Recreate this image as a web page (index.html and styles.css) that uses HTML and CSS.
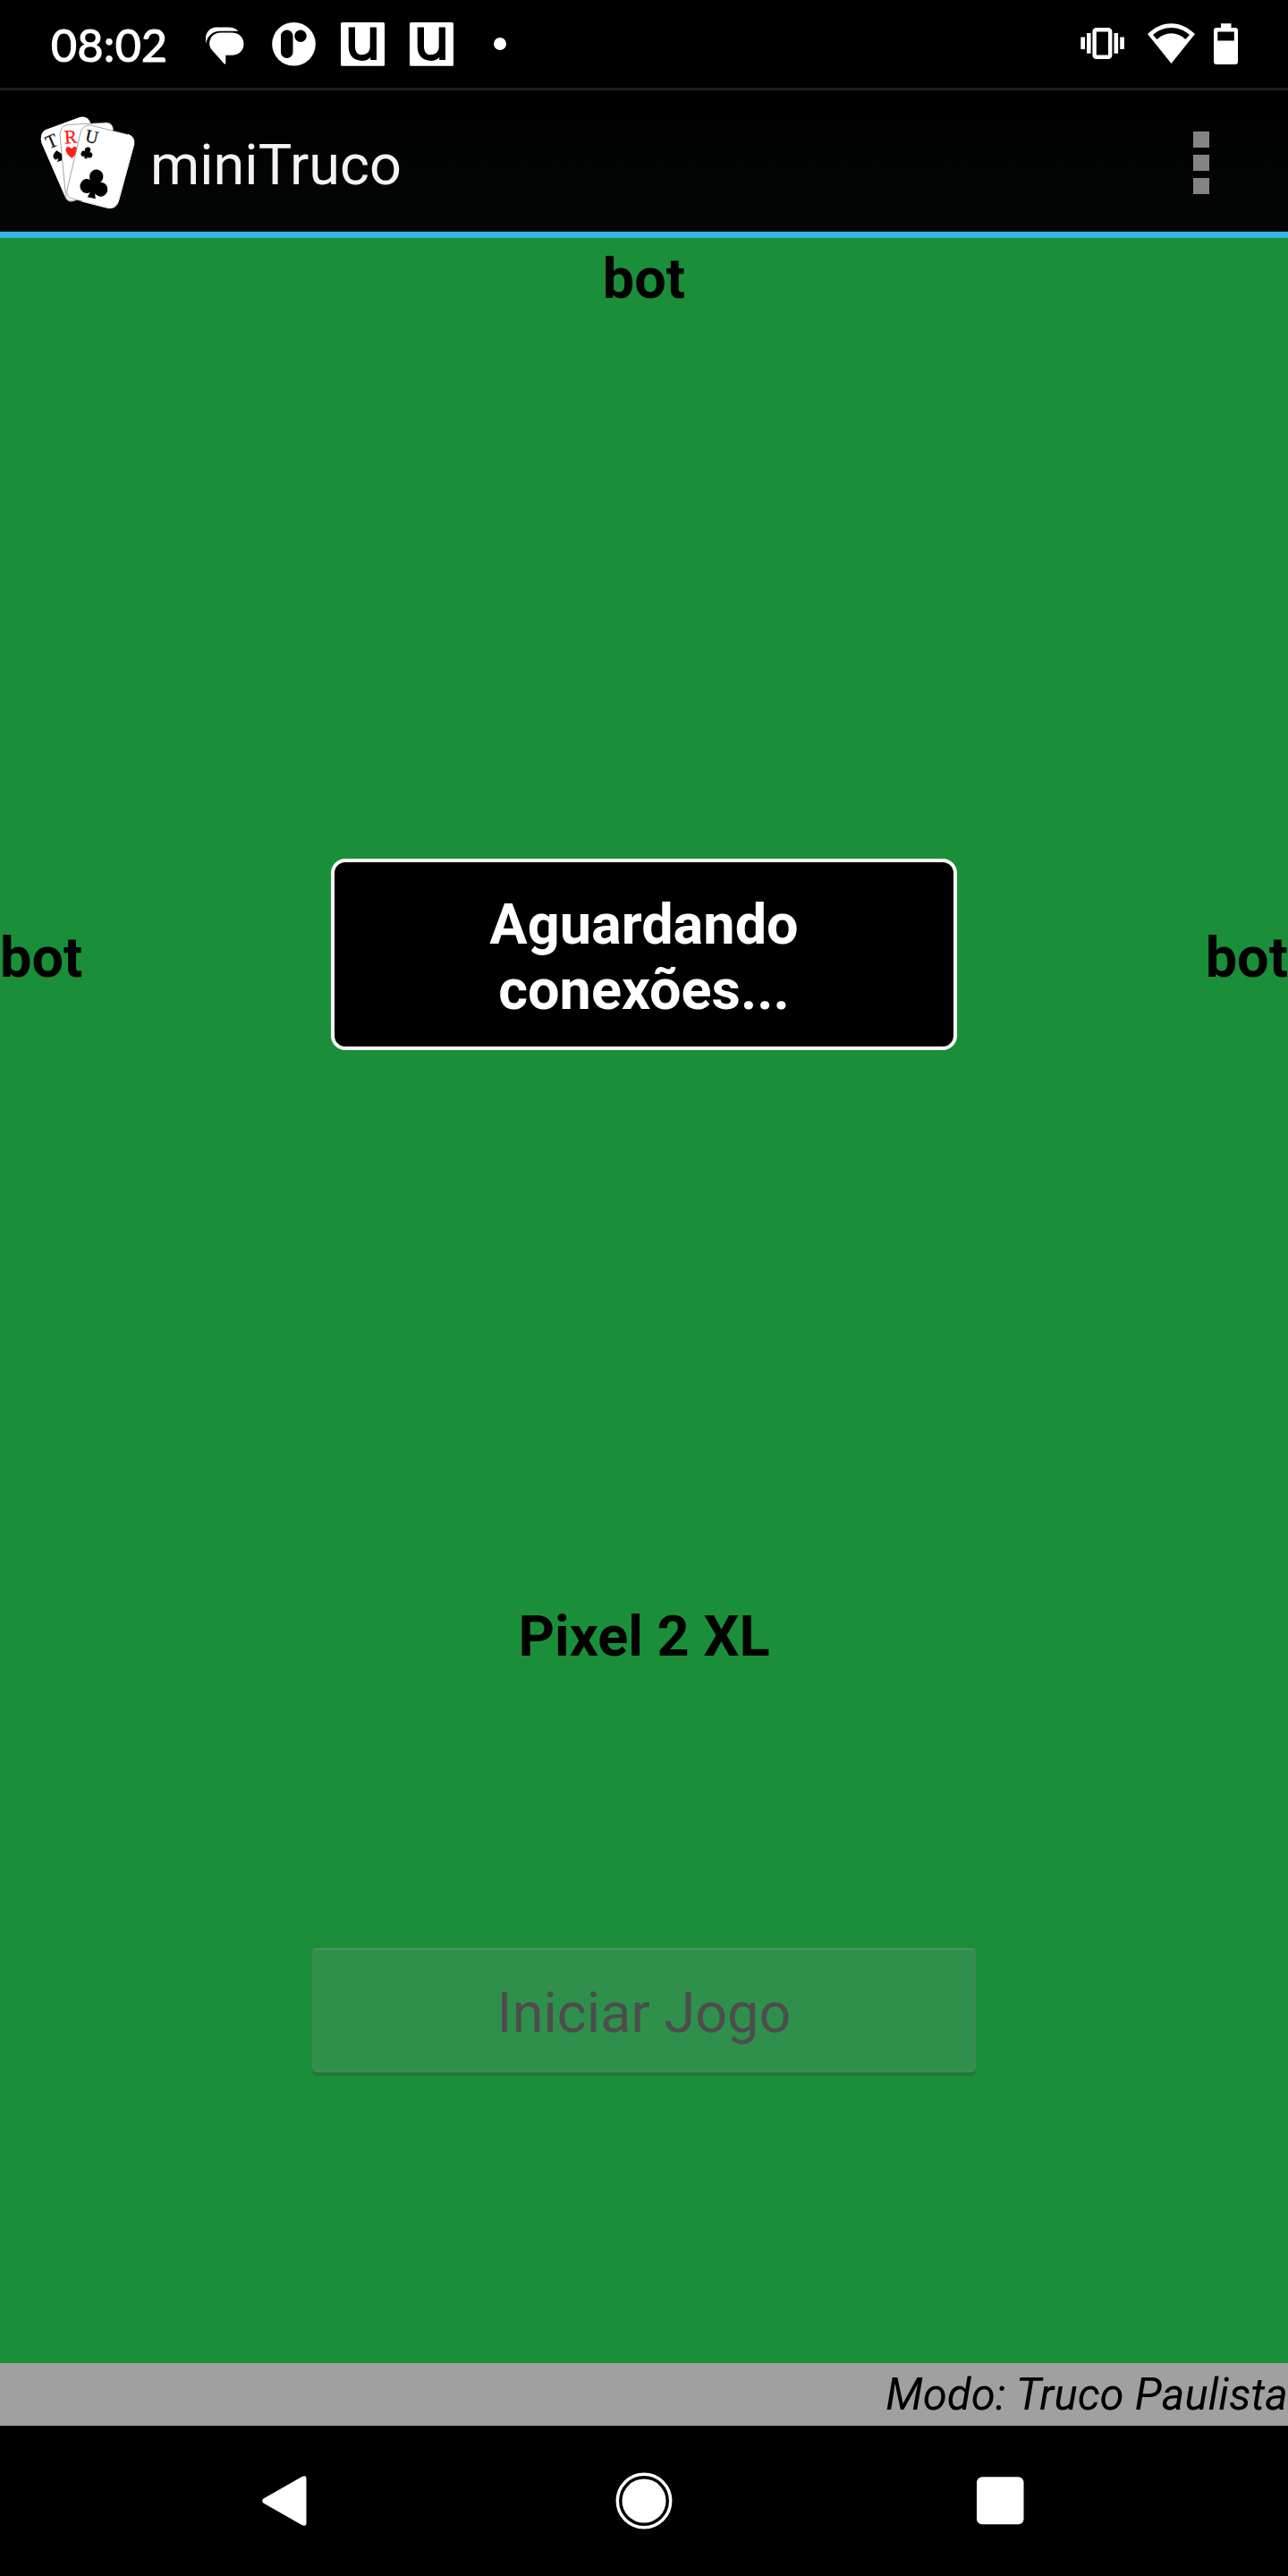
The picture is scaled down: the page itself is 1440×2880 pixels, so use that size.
FILE: index.html
```html
<!DOCTYPE html>
<html lang="pt-BR">
<head>
<meta charset="utf-8">
<title>miniTruco</title>
<link rel="stylesheet" href="styles.css">
</head>
<body>
<div class="screen">
  <header class="status">
    <span class="clock">08:02</span>
    <svg class="notifications" width="340" height="50" viewBox="228 24 340 50" fill="#fff">
      <path d="M230 49v-6c0-7 5-12.500 12-12.500h13c5 0 9 1.500 11.500 4.300H246c-8 0-14 5-16 14.200z"/>
      <path d="M247 36.500h12c8 0 13.500 5 13.500 12.500s-5.500 12.800-13.500 12.800h-6.700V71.500h-1.500L237 56c-2-2.500-2.800-4.500-2.800-7 0-7.500 5-12.500 12.800-12.500z"/>
      <circle cx="328.500" cy="49.300" r="24.300"/>
      <rect x="314" y="33.500" width="13.500" height="31.500" rx="6.700" fill="#000"/>
      <circle cx="336" cy="40.300" r="6.700" fill="#000"/>
      <g id="u-badge">
        <rect x="381" y="25" width="49" height="48.700" rx="1.500"/>
        <path d="M389.700 30.500h7.300V52c0 6 2.800 9.300 7.700 9.300 5.500 0 9-3.500 9-9.500V30.500h7.300V67h-6.800v-3c-2.500 2.500-5.500 3.900-9.300 3.900-9.300 0-15.200-5.900-15.200-15.600z" fill="#000"/>
      </g>
      <use href="#u-badge" x="77"/>
      <circle cx="559" cy="49" r="7"/>
    </svg>
    <svg class="indicators" width="180" height="50" viewBox="1206 24 180 50" fill="#fff">
      <path d="M1208.300 41.500h4.700V55h-4.700zM1215 37h4.600v22.700h-4.600zM1245.500 37h4.600v22.700h-4.600zM1252.200 41.500h4.700V55h-4.700z"/>
      <rect x="1223.600" y="33.200" width="17.600" height="30.500" rx="2" fill="none" stroke="#fff" stroke-width="4.400"/>
      <path fill-rule="evenodd" d="M1283 38c7.500-7.300 16.500-11.800 26.500-11.800S1328.300 30.700 1336 38l-26.500 33zM1289 39l4.700 5c4.500-4.300 10-6.700 15.800-6.700s11.300 2.400 15.800 6.700l4.700-5c-5.500-5-12.500-8-20.500-8s-15 3-20.500 8z"/>
      <path fill-rule="evenodd" d="M1365 26.300h11.500V31h4.500q3 0 3 3v35q0 3-3 3h-21q-3 0-3-3V34q0-3 3-3h5zM1361.300 35.500v10h18.500v-10z"/>
    </svg>
  </header>

  <div class="appbar">
    <svg class="logo" width="110" height="107" viewBox="40 55 330 321">
      <defs>
        <g id="club">
          <circle cx="0" cy="-23" r="24"/><circle cx="-25" cy="15" r="24"/><circle cx="25" cy="15" r="24"/>
          <path d="M-6-8H6L8 14Q9 42 15 50H-15Q-9 42-8 14z"/>
        </g>
      </defs>
      <path d="M62 107 178 64q26-7 37 20L160 345q-20 8-30-12L50 150q-7-30 12-43z" fill="#fff"/>
      <text class="rank" text-anchor="middle" y="21" font-size="64" transform="translate(84 145) rotate(-23) scale(.95 1)">T</text>
      <path d="M101 176q-14 13-11 23 5 13 17 3-1 9-6 13l18-6V188q-6-4-18-12z"/>
      <path d="M136 90 268 82q20 0 23 24L176 340q-36 14-44-8L112 123q1-29 24-33z" fill="#fff" stroke="#777" stroke-width="2"/>
      <text class="rank red" text-anchor="middle" y="21" font-size="64" transform="translate(148 130) rotate(-4) scale(.98 1)">R</text>
      <path d="M152 202Q130 184 131 171 137 155 151 170q13-17 20 2Q173 182 152 202z" fill="#ff201c"/>
      <path d="M215 91 340 122q24 7 20 34L308 347q-8 24-33 22L152 337q-22-8-15-33L181 116q8-27 34-25z" fill="#fff" stroke="#777" stroke-width="2"/>
      <path d="M340 122q24 7 20 34L308 347q-8 24-33 22l-90-23" fill="none" stroke="#fff" stroke-width="3"/>
      <text class="rank" text-anchor="middle" y="21" font-size="62" transform="translate(219 129) rotate(13) scale(.95 1)">U</text>
      <use href="#club" transform="translate(203 183) rotate(13) scale(.4)"/>
      <use href="#club" transform="translate(229 286) rotate(13) scale(.96 1)"/>
    </svg>
    <h1 class="title">miniTruco</h1>
    <div class="overflow"><i></i><i></i><i></i></div>
  </div>

  <main class="table">
    <div class="player top">bot</div>
    <div class="middle">
      <div class="player side">bot</div>
      <div class="notice">Aguardando<br>conexões...</div>
      <div class="player side">bot</div>
    </div>
    <div class="player self">Pixel 2 XL</div>
    <button class="start" disabled>Iniciar Jogo</button>
  </main>

  <div class="mode">Modo: Truco Paulista</div>

  <nav class="nav">
    <svg width="50" height="64" viewBox="0 0 50 64"><path d="M1.500 29.500 44.500 5q5-2.500 5 2.500v49q0 5-5 2.500L1.500 34.500q-2.500-2.500 0-5z" fill="#fff"/></svg>
    <svg width="64" height="64" viewBox="0 0 64 64"><circle cx="32" cy="32" r="29.700" fill="none" stroke="#fff" stroke-width="3.500"/><circle cx="32" cy="32" r="24.500" fill="#fff"/></svg>
    <svg width="53" height="64" viewBox="0 0 53 64"><rect y="5.300" width="52.500" height="53" rx="6" fill="#fff"/></svg>
  </nav>
</div>
</body>
</html>
```
FILE: styles.css
```css
* { box-sizing: border-box; }

body {
  margin: 0;
  background: #000;
  font-family: Roboto, sans-serif;
}

.screen {
  display: flex;
  flex-direction: column;
  width: 1440px;
  height: 2880px;
  overflow: hidden;
}

.status {
  display: flex;
  align-items: center;
  height: 101px;
  padding: 0 54px 0 57px;
  border-bottom: 3px solid #1c1e1d;
}

.clock {
  width: 171px;
  color: #fff;
  font: 400 50px/60px Lato, sans-serif;
  letter-spacing: .4px;
  -webkit-text-stroke: 1.2px #fff;
  padding-top: 2px;
}

.indicators { margin-left: auto; }

.appbar {
  display: flex;
  align-items: center;
  height: 165px;
  padding: 0 88px 0 43px;
  border-bottom: 7px solid #33b5e5;
  background: linear-gradient(#000, #040606);
}

.logo {
  flex: none;
  margin-top: 2px;
}

.rank {
  font-family: "Liberation Serif", serif;
  fill: #151515;
  stroke: #151515;
  stroke-width: 1;
}

.red {
  fill: #ff201c;
  stroke: #ff201c;
}

.title {
  margin: 9px auto 0 15px;
  color: #f3f3f3;
  font-size: 63px;
  font-weight: 400;
  line-height: 74px;
}

.overflow {
  display: grid;
  gap: 8px;
  margin-top: 3px;
}

.overflow i {
  width: 18px;
  height: 18px;
  background: #838383;
}

.table {
  display: flex;
  flex-direction: column;
  align-items: center;
  height: 2376px;
  background: #1b8e3a;
}

.player {
  color: #000;
  font-size: 63px;
  font-weight: 700;
  line-height: 74px;
}

.top { margin-top: 9px; }

.side { padding-top: 8px; }

.middle {
  display: flex;
  align-items: center;
  justify-content: space-between;
  width: 100%;
  height: 214px;
  margin-top: 611px;
}

.notice {
  width: 700px;
  height: 214px;
  padding: 33px 0 0;
  border: 4px solid #fff;
  border-radius: 16px;
  background: #000;
  color: #fff;
  font-size: 63px;
  font-weight: 700;
  line-height: 73px;
  text-align: center;
}

.self { margin-top: 619px; }

.start {
  width: 742px;
  height: 139px;
  margin-top: 311px;
  padding: 6px 0 0;
  border: 2px solid #458657;
  border-top-color: #519063;
  border-radius: 5px;
  background: #2f904b;
  box-shadow: 0 4px 1px #1a7a34;
  color: #4d4d4d;
  font: 400 63px/74px Roboto, sans-serif;
}

.mode {
  height: 70px;
  background: #a0a0a0;
  color: #000;
  font-size: 49px;
  font-style: italic;
  letter-spacing: .04px;
  line-height: 71px;
  text-align: right;
}

.nav {
  display: flex;
  align-items: center;
  justify-content: space-between;
  height: 168px;
  padding: 0 295px 0 293px;
}

.nav svg:nth-child(2) { margin-left: 4px; }
```
